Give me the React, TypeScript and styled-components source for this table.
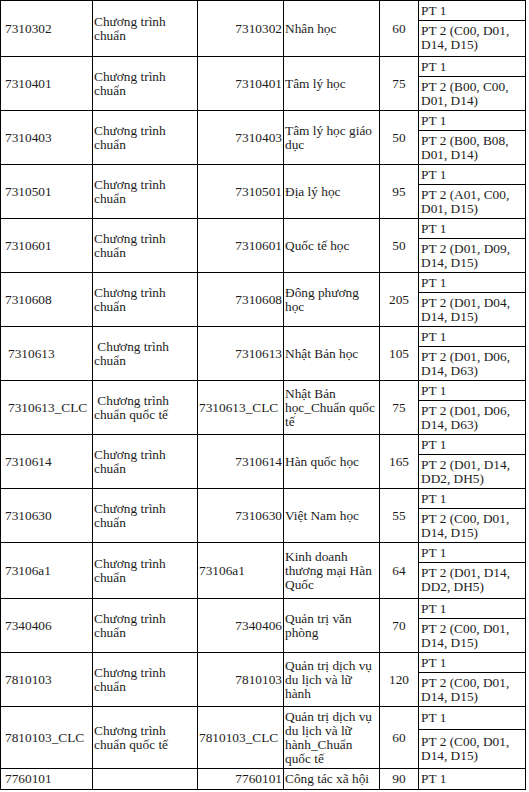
import React from "react";
import styled, { createGlobalStyle } from "styled-components";

const Global = createGlobalStyle`
  html, body { margin: 0; padding: 0; background: #fff; }
  body { font-family: "Liberation Serif", "Times New Roman", serif; color: #1c1c1c; }
`;

const Table = styled.table`
  border-collapse: collapse;
  table-layout: fixed;
  width: 525px;
  font-size: 13.33px;
  line-height: 14px;
`;

type Align = "left" | "right" | "center";

const Cell = styled.td<{ $align?: Align; $pl?: number }>`
  border: 1px solid #000;
  padding: 2.5px 1px 2.5px ${(p) => p.$pl ?? 1}px;
  text-align: ${(p) => p.$align ?? "left"};
  vertical-align: middle;
  word-wrap: break-word;
`;

const PtCell = styled(Cell)<{ $extra?: number }>`
  padding-left: 2px;
  padding-bottom: ${(p) => 2.5 + (p.$extra ?? 0)}px;
`;

interface Row {
  code: string;
  program: string;
  code2: string;
  code2Text?: boolean;
  name: string;
  quota: string;
  pt2: string;
  indent?: boolean;
  extra?: number;
}

const rows: Row[] = [
  { code: "7310302", program: "Chương trình chuẩn", code2: "7310302", name: "Nhân học", quota: "60", pt2: "PT 2 (C00, D01, D14, D15)", extra: 2 },
  { code: "7310401", program: "Chương trình chuẩn", code2: "7310401", name: "Tâm lý học", quota: "75", pt2: "PT 2 (B00, C00, D01, D14)" },
  { code: "7310403", program: "Chương trình chuẩn", code2: "7310403", name: "Tâm lý học giáo dục", quota: "50", pt2: "PT 2 (B00, B08, D01, D14)" },
  { code: "7310501", program: "Chương trình chuẩn", code2: "7310501", name: "Địa lý học", quota: "95", pt2: "PT 2 (A01, C00, D01, D15)" },
  { code: "7310601", program: "Chương trình chuẩn", code2: "7310601", name: "Quốc tế học", quota: "50", pt2: "PT 2 (D01, D09, D14, D15)" },
  { code: "7310608", program: "Chương trình chuẩn", code2: "7310608", name: "Đông phương học", quota: "205", pt2: "PT 2 (D01, D04, D14, D15)" },
  { code: "7310613", program: "Chương trình chuẩn", code2: "7310613", name: "Nhật Bản học", quota: "105", pt2: "PT 2 (D01, D06, D14, D63)", indent: true },
  { code: "7310613_CLC", program: "Chương trình chuẩn quốc tế", code2: "7310613_CLC", code2Text: true, name: "Nhật Bản học_Chuẩn quốc tế", quota: "75", pt2: "PT 2 (D01, D06, D14, D63)", indent: true },
  { code: "7310614", program: "Chương trình chuẩn", code2: "7310614", name: "Hàn quốc học", quota: "165", pt2: "PT 2 (D01, D14, DD2, DH5)" },
  { code: "7310630", program: "Chương trình chuẩn", code2: "7310630", name: "Việt Nam học", quota: "55", pt2: "PT 2 (C00, D01, D14, D15)" },
  { code: "73106a1", program: "Chương trình chuẩn", code2: "73106a1", code2Text: true, name: "Kinh doanh thương mại Hàn Quốc", quota: "64", pt2: "PT 2 (D01, D14, DD2, DH5)", extra: 2 },
  { code: "7340406", program: "Chương trình chuẩn", code2: "7340406", name: "Quản trị văn phòng", quota: "70", pt2: "PT 2 (C00, D01, D14, D15)" },
  { code: "7810103", program: "Chương trình chuẩn", code2: "7810103", name: "Quản trị dịch vụ du lịch và lữ hành", quota: "120", pt2: "PT 2 (C00, D01, D14, D15)" },
  { code: "7810103_CLC", program: "Chương trình chuẩn quốc tế", code2: "7810103_CLC", code2Text: true, name: "Quản trị dịch vụ du lịch và lữ hành_Chuẩn quốc tế", quota: "60", pt2: "PT 2 (C00, D01, D14, D15)" },
];

export default function App() {
  return (
    <>
      <Global />
      <Table>
        <colgroup>
          <col style={{ width: 92 }} />
          <col style={{ width: 105 }} />
          <col style={{ width: 86 }} />
          <col style={{ width: 96 }} />
          <col style={{ width: 39 }} />
          <col style={{ width: 107 }} />
        </colgroup>
        <tbody>
          {rows.map((r) => (
            <React.Fragment key={r.code}>
              <tr>
                <Cell rowSpan={2} $pl={r.indent ? 7 : 4}>{r.code}</Cell>
                <Cell rowSpan={2}>{r.indent ? "\u00a0" : ""}{r.program}</Cell>
                <Cell rowSpan={2} $align={r.code2Text ? "left" : "right"}>{r.code2}</Cell>
                <Cell rowSpan={2}>{r.name}</Cell>
                <Cell rowSpan={2} $align="center">{r.quota}</Cell>
                <PtCell>PT 1</PtCell>
              </tr>
              <tr>
                <PtCell $extra={r.extra}>{r.pt2}</PtCell>
              </tr>
            </React.Fragment>
          ))}
          <tr>
            <Cell $pl={4}>7760101</Cell>
            <Cell></Cell>
            <Cell $align="right">7760101</Cell>
            <Cell>Công tác xã hội</Cell>
            <Cell $align="center">90</Cell>
            <PtCell $extra={1}>PT 1</PtCell>
          </tr>
        </tbody>
      </Table>
    </>
  );
}
